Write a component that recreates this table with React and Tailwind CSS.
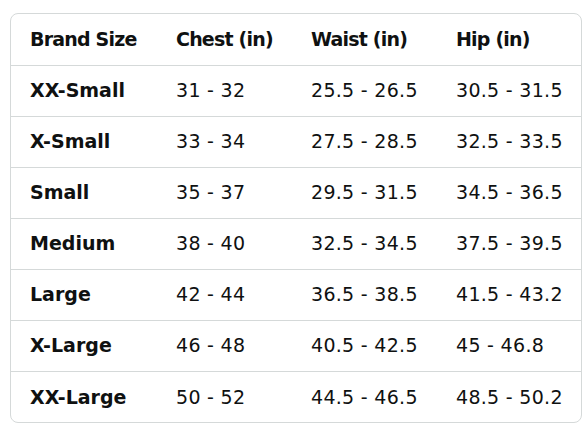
const HEAD = ['Brand Size', 'Chest (in)', 'Waist (in)', 'Hip (in)']

const ROWS = [
  ['XX-Small', '31 - 32', '25.5 - 26.5', '30.5 - 31.5'],
  ['X-Small', '33 - 34', '27.5 - 28.5', '32.5 - 33.5'],
  ['Small', '35 - 37', '29.5 - 31.5', '34.5 - 36.5'],
  ['Medium', '38 - 40', '32.5 - 34.5', '37.5 - 39.5'],
  ['Large', '42 - 44', '36.5 - 38.5', '41.5 - 43.2'],
  ['X-Large', '46 - 48', '40.5 - 42.5', '45 - 46.8'],
  ['XX-Large', '50 - 52', '44.5 - 46.5', '48.5 - 50.2'],
]

const COLS = ['w-[146px]', 'w-[135px]', 'w-[145px]', 'w-[146px]']

export default function App() {
  return (
    <div className="w-[588px] h-[441px] bg-white pt-[13px] pl-[10px] font-['DejaVu_Sans',sans-serif] text-[#0f1111]">
      <div className="w-[572px] border border-[#d5d9d9] rounded-lg overflow-hidden">
        <table className="w-full border-collapse table-fixed">
          <thead>
            <tr className="h-[51px]">
              {HEAD.map((h, i) => (
                <th key={h} className={`${COLS[i]} text-left pl-[19px] text-[19px] font-bold tracking-[-0.8px]`}>{h}</th>
              ))}
            </tr>
          </thead>
          <tbody>
            {ROWS.map(r => (
              <tr key={r[0]} className="h-[51px] border-t border-[#d5d9d9]">
                {r.map((c, i) => (
                  <td key={i} className={`pl-[19px] text-[19px] ${i === 0 ? 'font-bold' : 'tracking-[0.3px]'}`}>{c}</td>
                ))}
              </tr>
            ))}
          </tbody>
        </table>
      </div>
    </div>
  )
}
